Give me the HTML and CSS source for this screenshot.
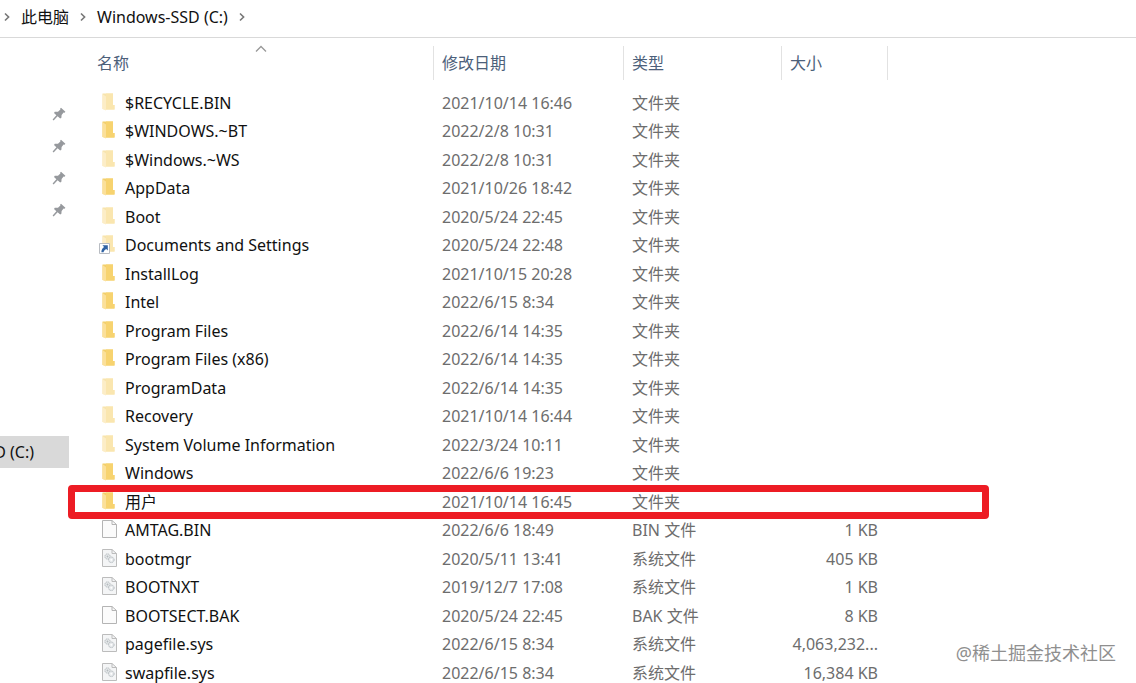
FILE: index.html
```
<!DOCTYPE html>
<html lang="zh-CN">
<head>
    <meta charset="UTF-8">
    <meta name="viewport" content="width=device-width, initial-scale=1.0">
    <title>Windows-SSD (C:)</title>
    <link rel="stylesheet" href="styles.css">
</head>
<body>
    <!-- Shared icons -->
    <svg class="sprite">
        <symbol id="chevron" viewBox="0 0 8 10">
            <path d="M2 1.5 5.6 5 2 8.5" fill="none" stroke="#777" stroke-width="1.6"/>
        </symbol>
        <symbol id="pin" viewBox="0 0 14 14">
            <path d="M9 0.8 13.4 4.8 12.6 5.8 11.6 5.6 9.6 8 9.4 10.8 8.2 11.4 5.6 9.2 1.6 13.4 0.6 12.6 4.4 8.2 2 6 2.8 4.8 6 4.8 8.4 2.6 8.2 1.6Z" fill="#96999d"/>
        </symbol>
        <symbol id="folder" viewBox="0 0 16 20">
            <path d="M1.5.5H12V12H13.5V16.5H5L1.5 16Z" fill="#f2cf6b"/>
            <path d="M1.5 1 5 3.5V17.5L1.5 16Z" fill="#fbe09a"/>
            <path d="M5 .5H12V12H13.5V16.5H5Z" fill="#f7d36f"/>
        </symbol>
        <symbol id="file" viewBox="0 0 16 20">
            <path d="M1.5.5H11L15.5 4.5V17.5H1.5Z" fill="#fbfbfb" stroke="#b4b4b4"/>
            <path d="M11 .5V4.5H15.5" fill="none" stroke="#b4b4b4"/>
        </symbol>
        <symbol id="system" viewBox="0 0 16 20">
            <path d="M1.5.5H11L15.5 4.5V17.5H1.5Z" fill="#f4f5f6" stroke="#bcbcbc"/>
            <path d="M11 .5V4.5H15.5" fill="none" stroke="#bcbcbc"/>
            <circle cx="6.5" cy="7.5" r="2.6" fill="#e6e9eb" stroke="#b3b9bd" stroke-dasharray="1.4 .6"/>
            <circle cx="6.5" cy="7.5" r=".9" fill="#b3b9bd"/>
            <circle cx="10.3" cy="10.8" r="2.8" fill="#e6e9eb" stroke="#b3b9bd" stroke-dasharray="1.4 .6"/>
            <circle cx="10.3" cy="10.8" r="1" fill="#fff"/>
        </symbol>
        <symbol id="shortcut" viewBox="0 0 11 11">
            <path d="M.5.5H10.5V10.5H.5Z" fill="#fff" stroke="#b8bcc2"/>
            <path d="M3.4 2.2H8.8V7.4L7.2 5.9C5.6 6.8 4.8 7.8 4.6 9.2H2.4C2.3 7 3.3 5.3 5.1 3.9Z" fill="#2f62a3"/>
        </symbol>
    </svg>

    <div class="explorer">
        <!-- Address bar -->
        <nav class="address">
            <svg class="chevron"><use href="#chevron"/></svg>
            <a href="#">此电脑</a>
            <svg class="chevron"><use href="#chevron"/></svg>
            <a href="#">Windows-SSD (C:)</a>
            <svg class="chevron"><use href="#chevron"/></svg>
        </nav>

        <div class="content">
            <!-- Navigation pane -->
            <aside class="sidebar">
                <div class="pins">
                    <svg><use href="#pin"/></svg>
                    <svg><use href="#pin"/></svg>
                    <svg><use href="#pin"/></svg>
                    <svg><use href="#pin"/></svg>
                </div>
                <a class="drive" href="#">D (C:)</a>
            </aside>

            <!-- File list -->
            <table class="files">
                <colgroup>
                    <col class="col-name">
                    <col class="col-date">
                    <col class="col-type">
                    <col class="col-size">
                </colgroup>
                <thead>
                    <tr>
                        <th>
                            <button>名称</button>
                            <svg class="sort" viewBox="0 0 12 8"><path d="M1 6.5 6 1.5 11 6.5" fill="none" stroke="#999" stroke-width="1.3"/></svg>
                        </th>
                        <th><button>修改日期</button></th>
                        <th><button>类型</button></th>
                        <th><button>大小</button></th>
                    </tr>
                </thead>
                <tbody>
                    <tr class="hidden-item">
                        <td><div class="name"><svg><use href="#folder"/></svg>$RECYCLE.BIN</div></td>
                        <td>2021/10/14 16:46</td><td>文件夹</td><td></td>
                    </tr>
                    <tr>
                        <td><div class="name"><svg><use href="#folder"/></svg>$WINDOWS.~BT</div></td>
                        <td>2022/2/8 10:31</td><td>文件夹</td><td></td>
                    </tr>
                    <tr class="hidden-item">
                        <td><div class="name"><svg><use href="#folder"/></svg>$Windows.~WS</div></td>
                        <td>2022/2/8 10:31</td><td>文件夹</td><td></td>
                    </tr>
                    <tr>
                        <td><div class="name"><svg><use href="#folder"/></svg>AppData</div></td>
                        <td>2021/10/26 18:42</td><td>文件夹</td><td></td>
                    </tr>
                    <tr class="hidden-item">
                        <td><div class="name"><svg><use href="#folder"/></svg>Boot</div></td>
                        <td>2020/5/24 22:45</td><td>文件夹</td><td></td>
                    </tr>
                    <tr class="hidden-item">
                        <td><div class="name"><svg><use href="#folder"/></svg>Documents and Settings<svg class="shortcut"><use href="#shortcut"/></svg></div></td>
                        <td>2020/5/24 22:48</td><td>文件夹</td><td></td>
                    </tr>
                    <tr>
                        <td><div class="name"><svg><use href="#folder"/></svg>InstallLog</div></td>
                        <td>2021/10/15 20:28</td><td>文件夹</td><td></td>
                    </tr>
                    <tr>
                        <td><div class="name"><svg><use href="#folder"/></svg>Intel</div></td>
                        <td>2022/6/15 8:34</td><td>文件夹</td><td></td>
                    </tr>
                    <tr>
                        <td><div class="name"><svg><use href="#folder"/></svg>Program Files</div></td>
                        <td>2022/6/14 14:35</td><td>文件夹</td><td></td>
                    </tr>
                    <tr>
                        <td><div class="name"><svg><use href="#folder"/></svg>Program Files (x86)</div></td>
                        <td>2022/6/14 14:35</td><td>文件夹</td><td></td>
                    </tr>
                    <tr class="hidden-item">
                        <td><div class="name"><svg><use href="#folder"/></svg>ProgramData</div></td>
                        <td>2022/6/14 14:35</td><td>文件夹</td><td></td>
                    </tr>
                    <tr class="hidden-item">
                        <td><div class="name"><svg><use href="#folder"/></svg>Recovery</div></td>
                        <td>2021/10/14 16:44</td><td>文件夹</td><td></td>
                    </tr>
                    <tr class="hidden-item">
                        <td><div class="name"><svg><use href="#folder"/></svg>System Volume Information</div></td>
                        <td>2022/3/24 10:11</td><td>文件夹</td><td></td>
                    </tr>
                    <tr>
                        <td><div class="name"><svg><use href="#folder"/></svg>Windows</div></td>
                        <td>2022/6/6 19:23</td><td>文件夹</td><td></td>
                    </tr>
                    <tr class="marked">
                        <td><div class="name"><svg><use href="#folder"/></svg>用户</div></td>
                        <td>2021/10/14 16:45</td><td>文件夹</td><td></td>
                    </tr>
                    <tr>
                        <td><div class="name"><svg><use href="#file"/></svg>AMTAG.BIN</div></td>
                        <td>2022/6/6 18:49</td><td>BIN 文件</td><td>1 KB</td>
                    </tr>
                    <tr>
                        <td><div class="name"><svg><use href="#system"/></svg>bootmgr</div></td>
                        <td>2020/5/11 13:41</td><td>系统文件</td><td>405 KB</td>
                    </tr>
                    <tr>
                        <td><div class="name"><svg><use href="#system"/></svg>BOOTNXT</div></td>
                        <td>2019/12/7 17:08</td><td>系统文件</td><td>1 KB</td>
                    </tr>
                    <tr>
                        <td><div class="name"><svg><use href="#file"/></svg>BOOTSECT.BAK</div></td>
                        <td>2020/5/24 22:45</td><td>BAK 文件</td><td>8 KB</td>
                    </tr>
                    <tr>
                        <td><div class="name"><svg><use href="#system"/></svg>pagefile.sys</div></td>
                        <td>2022/6/15 8:34</td><td>系统文件</td><td>4,063,232...</td>
                    </tr>
                    <tr>
                        <td><div class="name"><svg><use href="#system"/></svg>swapfile.sys</div></td>
                        <td>2022/6/15 8:34</td><td>系统文件</td><td>16,384 KB</td>
                    </tr>
                </tbody>
            </table>
        </div>
        <div class="watermark">@稀土掘金技术社区</div>
    </div>
</body>
</html>
```
FILE: styles.css
```
* {
    box-sizing: border-box;
}
body {
    margin: 0;
    background-color: #fff;
    color: #111;
    font-family: "Noto Sans", "Noto Sans CJK SC", sans-serif;
    font-size: 16px;
    line-height: 24px;
}
a {
    color: inherit;
    text-decoration: none;
}
.sprite {
    display: none;
}
.explorer {
    position: relative;
    height: 100vh;
    overflow: hidden;
}

/* Address bar */
.address {
    display: flex;
    align-items: center;
    gap: 10px;
    height: 38px;
    padding: 0 3px 4px;
    border-bottom: 1px solid #d9d9d9;
}
.chevron {
    width: 8px;
    height: 10px;
}

.content {
    display: flex;
}

/* Navigation pane */
.sidebar {
    flex: none;
    width: 69px;
    margin-right: 20px;
    padding-top: 69px;
}
.pins {
    display: flex;
    flex-direction: column;
    align-items: flex-end;
    gap: 18px;
    padding-right: 3px;
}
.pins svg {
    width: 14px;
    height: 14px;
}
.drive {
    display: flex;
    align-items: center;
    justify-content: flex-end;
    height: 32px;
    margin-top: 219px;
    padding-right: 35px;
    background-color: #d9d9d9;
    white-space: nowrap;
}

/* File list */
.files {
    width: 799px;
    table-layout: fixed;
    border-collapse: separate;
    border-spacing: 0;
    margin-top: 8px;
    color: #6d6d6d;
}
.col-date {
    width: 190px;
}
.col-type {
    width: 158px;
}
.col-size {
    width: 106px;
}
th {
    position: relative;
    height: 34px;
    padding: 0 8px;
    border-right: 1px solid #e2e2e2;
    text-align: left;
}
th button {
    display: block;
    padding: 0;
    border: none;
    background: none;
    color: #4c607a;
    font: inherit;
    font-weight: normal;
    cursor: pointer;
}
.sort {
    position: absolute;
    top: -1px;
    left: 50%;
    width: 12px;
    height: 8px;
    margin-left: -6px;
}
/* Gap between the header and the first row */
tbody::before {
    content: "";
    display: table-row;
    height: 9px;
}
td {
    height: 28px;
    padding: 2px 8px 0;
    vertical-align: top;
    white-space: nowrap;
}
tr:nth-child(even) td {
    height: 29px;
}
td:last-child {
    padding-right: 10px;
    text-align: right;
}
.name {
    position: relative;
    display: flex;
    align-items: center;
    gap: 8px;
    padding-left: 4px;
    color: #111;
}
.name svg {
    flex: none;
    width: 16px;
    height: 20px;
}
.hidden-item .name > svg:first-child {
    opacity: 0.55;
}
.name .shortcut {
    position: absolute;
    left: 2px;
    bottom: 3px;
    width: 11px;
    height: 11px;
}

/* Red frame round the user folder */
.marked {
    position: relative;
}
.marked td:last-child::after {
    content: "";
    position: absolute;
    top: -3px;
    right: -101px;
    bottom: -3px;
    left: -21px;
    border: 7px solid #ed1c24;
    border-radius: 4px;
}

.watermark {
    position: absolute;
    right: 20px;
    bottom: 18px;
    color: #8f8f8f;
    font-size: 18px;
}
```
